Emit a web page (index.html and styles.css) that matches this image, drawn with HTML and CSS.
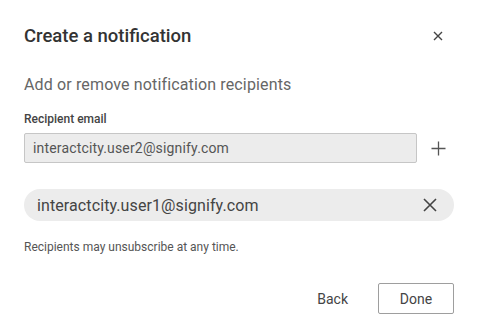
FILE: index.html
```html
<!DOCTYPE html>
<html>
<head>
<meta charset="utf-8">
<link rel="stylesheet" href="styles.css">
</head>
<body>
<div class="dialog">
  <div class="header">
    <h1 class="title">Create a notification</h1>
    <button class="icon-btn close-btn" aria-label="Close">
      <svg width="10" height="10" viewBox="0 0 10 10"><path d="M1 1L9 9M9 1L1 9" stroke="#444" stroke-width="1.4" fill="none"/></svg>
    </button>
  </div>
  <p class="subtitle">Add or remove notification recipients</p>
  <label class="label">Recipient email</label>
  <div class="input-row">
    <div class="input">interactcity.user2@signify.com</div>
    <button class="icon-btn add-btn" aria-label="Add">
      <svg width="15" height="15" viewBox="0 0 15 15"><path d="M7.5 0.5V14.5M0.5 7.5H14.5" stroke="#555" stroke-width="1.3" fill="none"/></svg>
    </button>
  </div>
  <div class="chip">
    <span class="chip-text">interactcity.user1@signify.com</span>
    <svg class="chip-x" width="14" height="14" viewBox="0 0 14 14"><path d="M1 1L13 13M13 1L1 13" stroke="#444" stroke-width="1.6" fill="none"/></svg>
  </div>
  <p class="note">Recipients may unsubscribe at any time.</p>
  <div class="actions">
    <button class="btn btn-text">Back</button>
    <button class="btn btn-outline">Done</button>
  </div>
</div>
</body>
</html>
```
FILE: styles.css
```css
* { box-sizing: border-box; }
html, body { margin: 0; padding: 0; background: #fff; }
body { font-family: Roboto, "Noto Sans", sans-serif; color: #333; }
.dialog { width: 478px; height: 335px; padding: 24px 24px 0 24px; }
.header { display: flex; align-items: center; justify-content: space-between; height: 24px; }
.title { margin: 0; font-size: 18.5px; font-weight: 500; line-height: 24px; color: #333; }
.icon-btn { border: 0; background: none; padding: 0; width: 32px; height: 24px; display: flex; align-items: center; justify-content: center; }
.subtitle { margin: 25px 0 0 0; font-size: 16px; letter-spacing: 0.14px; line-height: 24px; color: #666; }
.label { display: block; margin-top: 14px; font-size: 12px; line-height: 16px; font-weight: 500; color: #444; }
.input-row { display: flex; align-items: center; gap: 5px; margin-top: 6px; }
.input { flex: 1; height: 30px; background: #ececec; border: 1px solid #c6c6c6; border-radius: 2px; padding: 0 8px; font-size: 14px; letter-spacing: 0.16px; line-height: 28px; color: #555; }
.add-btn { height: 30px; }
.chip { margin-top: 26px; height: 32px; border-radius: 16px; background: #ececec; display: flex; align-items: center; justify-content: space-between; padding: 0 17px 0 13px; }
.chip-text { font-size: 16px; letter-spacing: 0.1px; color: #444; }
.note { margin: 18px 0 0 0; font-size: 12px; line-height: 16px; color: #555; }
.actions { display: flex; justify-content: flex-end; align-items: center; gap: 20px; margin-top: 28px; }
.btn { font-family: inherit; font-size: 14px; color: #444; background: none; cursor: pointer; }
.btn-text { border: 0; padding: 0 10px; height: 31px; }
.btn-outline { width: 76px; height: 31px; border: 1px solid #9e9e9e; border-radius: 2px; }
```
